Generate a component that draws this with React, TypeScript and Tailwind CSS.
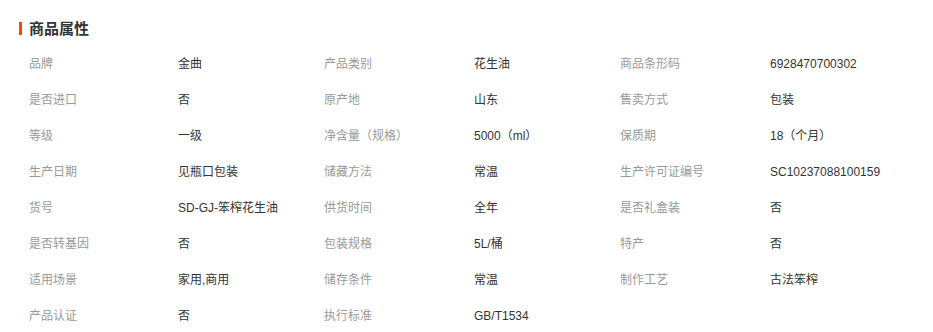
const rows: [string, string][][] = [
  [["品牌", "金曲"], ["产品类别", "花生油"], ["商品条形码", "6928470700302"]],
  [["是否进口", "否"], ["原产地", "山东"], ["售卖方式", "包装"]],
  [["等级", "一级"], ["净含量（规格）", "5000（ml）"], ["保质期", "18（个月）"]],
  [["生产日期", "见瓶口包装"], ["储藏方法", "常温"], ["生产许可证编号", "SC10237088100159"]],
  [["货号", "SD-GJ-笨榨花生油"], ["供货时间", "全年"], ["是否礼盒装", "否"]],
  [["是否转基因", "否"], ["包装规格", "5L/桶"], ["特产", "否"]],
  [["适用场景", "家用,商用"], ["储存条件", "常温"], ["制作工艺", "古法笨榨"]],
  [["产品认证", "否"], ["执行标准", "GB/T1534"]],
]

export default function App() {
  return (
    <div className="w-[933px] h-[332px] bg-white overflow-hidden font-['Liberation_Sans','Noto_Sans_CJK_SC',sans-serif]">
      {/* 标题 */}
      <div className="h-[45px] pt-[12px] flex items-center pl-[19px]">
        <span className="w-[3px] h-[13px] bg-[#ff4400] mr-[7px]" />
        <h2 className="text-[15px] font-bold text-[#333] leading-none">商品属性</h2>
      </div>

      {/* 属性表 */}
      <div className="pl-[29px] pt-[1px]">
        {rows.map((row, i) => (
          <div
            key={i}
            className="grid grid-cols-[149px_146px_150px_146px_150px_1fr] h-[36px] items-center text-[12px] leading-none"
          >
            {row.map(([label, value]) => (
              <div key={label} className="contents">
                <span className="text-[#999]">{label}</span>
                <span className="text-[#333]">{value}</span>
              </div>
            ))}
          </div>
        ))}
      </div>
    </div>
  )
}
